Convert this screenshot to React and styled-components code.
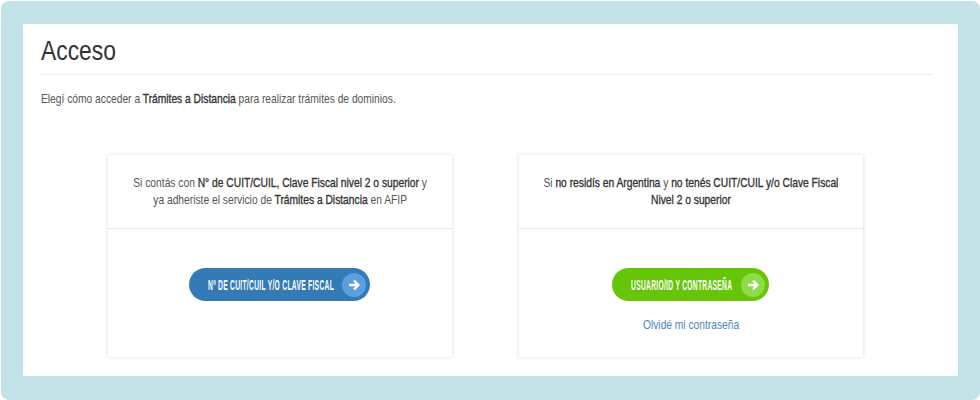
import React from "react";
import styled, { createGlobalStyle } from "styled-components";

const Global = createGlobalStyle`
  html, body {
    margin: 0;
    padding: 0;
    background: #ffffff;
  }
  body {
    font-family: "Liberation Sans", Arial, sans-serif;
    color: #333333;
  }
`;

const Frame = styled.div`
  box-sizing: border-box;
  width: 979px;
  height: 399px;
  margin: 1px 0 0 1px;
  padding: 23px 22px;
  background: #c4e3e8;
  border-radius: 8px;
  overflow: hidden;
`;

const Panel = styled.main`
  box-sizing: border-box;
  height: 352px;
  padding: 0 26px 0 18px;
  background: #ffffff;
`;

const Header = styled.header`
  height: 50px;
  border-bottom: 1px solid #eeeeee;
`;

const Title = styled.h1`
  margin: 0;
  padding-top: 11px;
  font-size: 28px;
  line-height: 32px;
  font-weight: 400;
  color: #333333;
  transform: scaleX(0.815);
  transform-origin: left center;
`;

const Lead = styled.p`
  margin: 16px 0 0;
  font-size: 13px;
  line-height: 16px;
  color: #555555;
  white-space: nowrap;
  transform: scaleX(0.788);
  transform-origin: left center;
`;

const Strong = styled.strong`
  font-weight: 400;
  color: #333333;
  -webkit-text-stroke: 0.35px #333333;
`;

const Cards = styled.div`
  display: flex;
  justify-content: space-between;
  width: 755px;
  margin: 48px 0 0 67px;
`;

const Card = styled.section`
  box-sizing: border-box;
  width: 344px;
  height: 202px;
  background: #ffffff;
  box-shadow: 0 0 4px rgba(0, 0, 0, 0.15);
`;

const CardHead = styled.div`
  box-sizing: border-box;
  display: flex;
  justify-content: center;
  height: 74px;
  padding-top: 19px;
  border-bottom: 1px solid #e8e8e8;
`;

const CardText = styled.p`
  flex: none;
  margin: 0;
  font-size: 13px;
  line-height: 17px;
  text-align: center;
  white-space: nowrap;
  color: #555555;
  transform: scaleX(0.789);
`;

const CardBody = styled.div`
  display: flex;
  flex-direction: column;
  align-items: center;
  padding-top: 39px;
`;

const Pill = styled.a`
  box-sizing: border-box;
  display: flex;
  align-items: center;
  height: 33px;
  width: ${(p) => p.$width}px;
  margin-right: 1px;
  padding: 0 4px 0 19px;
  border-radius: 17px;
  background: ${(p) => p.$color};
  color: #ffffff;
  font-size: 14px;
  font-weight: 700;
  letter-spacing: 0.6px;
  white-space: nowrap;
`;

const PillLabel = styled.span`
  flex: 1 1 0;
  min-width: 0;
  transform: scaleX(0.479);
  transform-origin: left center;
`;

const ArrowDisc = styled.span`
  flex: none;
  display: flex;
  align-items: center;
  justify-content: center;
  width: 24px;
  height: 24px;
  border-radius: 50%;
  background: ${(p) => p.$color};
`;

const ForgotLink = styled.a`
  flex: none;
  margin-top: 16px;
  font-size: 13px;
  line-height: 16px;
  white-space: nowrap;
  color: #4a86c0;
  transform: scaleX(0.787);
`;

const Arrow = () => (
  <svg width="12" height="12" viewBox="0 0 12 12" fill="none">
    <path
      d="M1 6H10M6 1.6L10.4 6L6 10.4"
      stroke="#ffffff"
      strokeWidth="2.4"
      strokeLinejoin="miter"
    />
  </svg>
);

const App = () => {
  return (
    <>
      <Global />
      <Frame>
        <Panel>
          <Header>
            <Title>Acceso</Title>
          </Header>
          <Lead>
            Elegí cómo acceder a <Strong>Trámites a Distancia</Strong> para
            realizar trámites de dominios.
          </Lead>
          <Cards>
            <Card>
              <CardHead>
                <CardText>
                  Si contás con <Strong>N° de CUIT/CUIL, Clave Fiscal nivel 2 o superior</Strong> y
                  <br />
                  ya adheriste el servicio de <Strong>Trámites a Distancia</Strong> en AFIP
                </CardText>
              </CardHead>
              <CardBody>
                <Pill $width={181} $color="#337ab7">
                  <PillLabel>Nº DE CUIT/CUIL Y/O CLAVE FISCAL</PillLabel>
                  <ArrowDisc $color="#5b9fe0">
                    <Arrow />
                  </ArrowDisc>
                </Pill>
              </CardBody>
            </Card>
            <Card>
              <CardHead>
                <CardText>
                  Si <Strong>no residís en Argentina</Strong> y <Strong>no tenés CUIT/CUIL y/o Clave Fiscal</Strong>
                  <br />
                  <Strong>Nivel 2 o superior</Strong>
                </CardText>
              </CardHead>
              <CardBody>
                <Pill $width={157} $color="#66c508">
                  <PillLabel>USUARIO/ID Y CONTRASEÑA</PillLabel>
                  <ArrowDisc $color="#8edc48">
                    <Arrow />
                  </ArrowDisc>
                </Pill>
                <ForgotLink>Olvidé mi contraseña</ForgotLink>
              </CardBody>
            </Card>
          </Cards>
        </Panel>
      </Frame>
    </>
  );
};

export default App;
